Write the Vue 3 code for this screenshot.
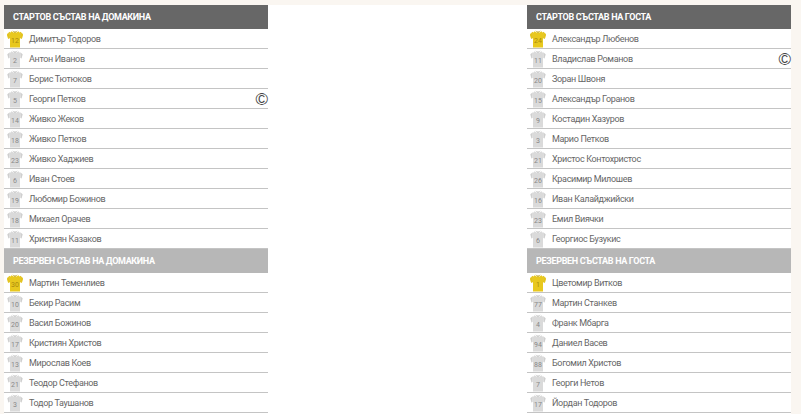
<script setup>
const teams = [
  {
    key: 'home',
    startTitle: 'СТАРТОВ СЪСТАВ НА ДОМАКИНА',
    benchTitle: 'РЕЗЕРВЕН СЪСТАВ НА ДОМАКИНА',
    start: [
      ['12', 'Димитър Тодоров', true],
      ['2', 'Антон Иванов'],
      ['7', 'Борис Тютюков'],
      ['5', 'Георги Петков', false, true],
      ['14', 'Живко Жеков'],
      ['18', 'Живко Петков'],
      ['23', 'Живко Хаджиев'],
      ['6', 'Иван Стоев'],
      ['19', 'Любомир Божинов'],
      ['18', 'Михаел Орачев'],
      ['11', 'Християн Казаков']
    ],
    bench: [
      ['30', 'Мартин Теменлиев', true],
      ['10', 'Бекир Расим'],
      ['20', 'Васил Божинов'],
      ['17', 'Кристиян Христов'],
      ['13', 'Мирослав Коев'],
      ['21', 'Теодор Стефанов'],
      ['3', 'Тодор Таушанов']
    ]
  },
  {
    key: 'away',
    startTitle: 'СТАРТОВ СЪСТАВ НА ГОСТА',
    benchTitle: 'РЕЗЕРВЕН СЪСТАВ НА ГОСТА',
    start: [
      ['24', 'Александър Любенов', true],
      ['11', 'Владислав Романов', false, true],
      ['20', 'Зоран Швоня'],
      ['15', 'Александър Горанов'],
      ['9', 'Костадин Хазуров'],
      ['3', 'Марио Петков'],
      ['21', 'Христос Контохристос'],
      ['26', 'Красимир Милошев'],
      ['16', 'Иван Калайджийски'],
      ['23', 'Емил Виячки'],
      ['6', 'Георгиос Бузукис']
    ],
    bench: [
      ['1', 'Цветомир Витков', true],
      ['77', 'Мартин Станкев'],
      ['4', 'Франк Мбарга'],
      ['94', 'Даниел Васев'],
      ['88', 'Богомил Христов'],
      ['7', 'Георги Нетов'],
      ['17', 'Йордан Тодоров']
    ]
  }
]
</script>

<template>
  <div class="page">
    <template v-for="(team, i) in teams" :key="team.key">
      <div v-if="i === 1" class="middle"></div>
      <section class="team">
        <h2 class="head dark">{{ team.startTitle }}</h2>
        <ul class="list">
          <li v-for="p in team.start" :key="p[1]" class="row">
            <span class="shirt" :class="{ gk: p[2] }">
              <svg viewBox="0 0 16 18" width="16" height="18">
                <path class="sleeve" d="M2.8 2.2 L0.3 4.2 L1.4 8.4 L2.6 8 Z M13.2 2.2 L15.7 4.2 L14.6 8.4 L13.4 8 Z" />
                <path class="cloth" d="M4.5 1.2 L6.5 2.4 H9.5 L11.5 1.2 L13 3 V17.5 H3 V3 Z" />
                <path class="collar" d="M5.2 0.6 L8 3 L10.8 0.6 L8 1.8 Z" />
              </svg>
              <em>{{ p[0] }}</em>
            </span>
            <span class="name">{{ p[1] }}</span>
            <span v-if="p[3]" class="cap">©</span>
          </li>
        </ul>
        <h2 class="head light">{{ team.benchTitle }}</h2>
        <ul class="list">
          <li v-for="p in team.bench" :key="p[1]" class="row">
            <span class="shirt" :class="{ gk: p[2] }">
              <svg viewBox="0 0 16 18" width="16" height="18">
                <path class="sleeve" d="M2.8 2.2 L0.3 4.2 L1.4 8.4 L2.6 8 Z M13.2 2.2 L15.7 4.2 L14.6 8.4 L13.4 8 Z" />
                <path class="cloth" d="M4.5 1.2 L6.5 2.4 H9.5 L11.5 1.2 L13 3 V17.5 H3 V3 Z" />
                <path class="collar" d="M5.2 0.6 L8 3 L10.8 0.6 L8 1.8 Z" />
              </svg>
              <em>{{ p[0] }}</em>
            </span>
            <span class="name">{{ p[1] }}</span>
          </li>
        </ul>
      </section>
    </template>
  </div>
</template>

<style scoped>
.page {
  width: 801px;
  height: 414px;
  box-sizing: border-box;
  overflow: hidden;
  padding: 5px 10px 0 4px;
  display: flex;
  background: #faf6f1;
  font-family: Roboto, "Liberation Sans", sans-serif;
}
.middle {
  flex: 1;
  background: #fff;
}
.team {
  width: 264px;
  background: #fff;
}
.head {
  margin: 0;
  height: 24px;
  line-height: 24px;
  padding-left: 9px;
  color: #fff;
  font-size: 9px;
  font-weight: 700;
  letter-spacing: -0.33px;
}
.dark { background: #676767; }
.light { background: #b7b7b7; }
.list { list-style: none; margin: 0; padding: 0; }
.row {
  height: 19px;
  border-bottom: 1px solid #c4c4c4;
  display: flex;
  align-items: center;
  position: relative;
}
.shirt {
  width: 16px;
  height: 18px;
  margin-left: 3px;
  position: relative;
  flex: none;
}
.shirt svg { display: block; }
.sleeve { fill: #cfcfcf; }
.cloth { fill: #dadada; }
.collar { fill: #bdbdbd; }
.gk .sleeve { fill: #e3c31c; stroke: #e3c31c; stroke-width: 1; }
.gk .cloth { fill: #e8c81e; }
.gk .collar { fill: #b89a10; }
.shirt em {
  position: absolute;
  left: 0;
  right: 0;
  top: 6px;
  text-align: center;
  font-style: normal;
  font-size: 7px;
  line-height: 10px;
  color: #888;
}
.gk em { color: #a98a10; }
.name {
  margin-left: 6px;
  margin-top: 1px;
  font-size: 9px;
  letter-spacing: -0.33px;
  color: #666;
}
.cap {
  position: absolute;
  right: 0;
  top: 1px;
  font-family: "Liberation Sans", sans-serif;
  font-size: 17px;
  line-height: 20px;
  color: #444;
}
</style>
